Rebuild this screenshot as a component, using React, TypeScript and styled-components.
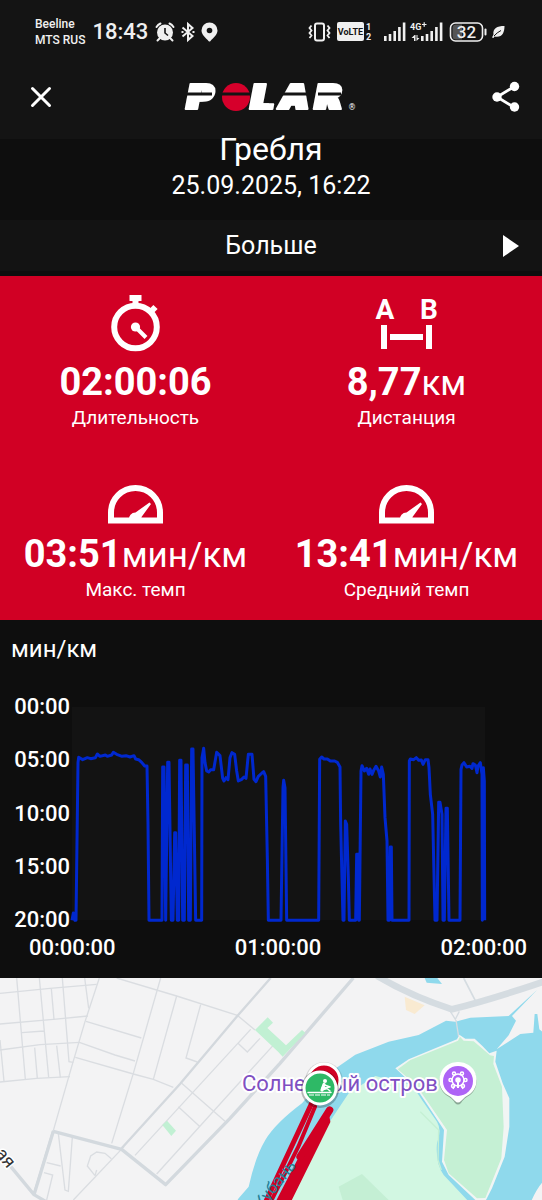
import React from "react";
import styled, { createGlobalStyle } from "styled-components";

const GlobalStyle = createGlobalStyle`
  *, *::before, *::after { box-sizing: border-box; }
  body { margin: 0; background: #0e0e0e; }
  svg { display: block; flex: none; overflow: visible; }
`;

const Screen = styled.div`
  display: flex;
  flex-direction: column;
  min-height: 100vh;
  background: #0e0e0e;
  color: #fff;
  font-family: Roboto, "Noto Sans", sans-serif;
`;

const Header = styled.header`
  background: #141414;
`;

const StatusBar = styled.div`
  display: flex;
  align-items: center;
  height: 64px;
  padding: 0 37px 0 35px;
  color: #f0f0f0;
`;

const Carriers = styled.div`
  font-size: 12px;
  font-weight: 500;
  line-height: 16px;
  white-space: nowrap;
`;

const Clock = styled.time`
  margin: 0 7px;
  font-size: 22px;
  line-height: 28px;
  font-weight: 500;
`;

const StatusGroup = styled.div<{ $end?: boolean }>`
  display: flex;
  align-items: center;
  gap: 6px;
  margin-left: ${(p) => (p.$end ? "auto" : "0")};
`;

const TitleBar = styled.div`
  display: flex;
  align-items: center;
  justify-content: space-between;
  height: 75px;
  padding: 0 20px 10px 28px;
`;

const IconButton = styled.button`
  display: flex;
  padding: 0;
  border: 0;
  background: none;
  color: #fff;
  cursor: pointer;
`;

const SessionHead = styled.section`
  display: flex;
  flex-direction: column;
  align-items: center;
  height: 81px;
`;

const Sport = styled.h1`
  margin: -9px 0 0;
  font-size: 32px;
  line-height: 38px;
  font-weight: 400;
`;

const SessionDate = styled.time`
  margin-top: 3px;
  font-size: 25px;
  line-height: 30px;
`;

const MoreButton = styled.button`
  display: grid;
  grid-template-columns: 40px 1fr 40px;
  align-items: center;
  height: 51px;
  margin-bottom: 5px;
  padding: 0;
  border: 0;
  background: #131313;
  color: #fff;
  font: 400 25px/30px Roboto, "Noto Sans", sans-serif;
  cursor: pointer;
`;

const MoreText = styled.span`
  grid-column: 2;
`;

const Metrics = styled.section`
  display: grid;
  grid-template-columns: 1fr 1fr;
  background: #d10024;
`;

const Metric = styled.div`
  display: flex;
  flex-direction: column;
  align-items: center;
  padding: 18px 0;
`;

const MetricIcon = styled.div`
  display: flex;
  align-items: flex-end;
  height: 58px;
`;

const MetricValue = styled.div`
  margin-top: 8px;
  font-size: 38px;
  line-height: 44px;
  font-weight: 700;
  white-space: nowrap;
`;

const Unit = styled.span`
  font-size: 35px;
  line-height: 1;
  font-weight: 400;
`;

const MetricLabel = styled.div`
  margin-top: 2px;
  font-size: 19px;
  line-height: 24px;
`;

const ChartPanel = styled.section`
  padding: 15px 0 18px;
`;

const ChartUnit = styled.h2`
  margin: 0 0 31px 11px;
  font-size: 24px;
  line-height: 29px;
  font-weight: 400;
`;

const ChartBody = styled.div`
  display: grid;
  grid-template-columns: 70px 1fr;
  column-gap: 2px;
  padding-right: 57px;
`;

const AxisY = styled.div`
  display: flex;
  flex-direction: column;
  justify-content: space-between;
  align-items: flex-end;
  height: 237px;
  font-size: 22px;
  line-height: 24px;
  font-weight: 500;
`;

const Plot = styled.svg`
  width: 100%;
  height: 213px;
  margin-top: 12px;
  background: #131313;
`;

const AxisX = styled.div`
  display: flex;
  justify-content: space-between;
  padding: 4px 15px 0 29px;
  font-size: 22px;
  line-height: 24px;
  font-weight: 500;
`;

const MapSection = styled.section`
  flex: 1 0 222px;
  background: #f3f3f4;
  overflow: hidden;
`;

const MapDrawing = styled.svg`
  width: 100%;
  height: 100%;
  min-height: 222px;
  overflow: hidden;
`;

const AlarmIcon = () => (
  <svg width="20" height="20" viewBox="0 0 20 20" fill="none" stroke="#f0f0f0">
    <circle cx="10" cy="10.5" r="8" fill="#f0f0f0" stroke="none" />
    <path d="M1.5 5A10 10 0 0 1 5.5 1.5M14.5 1.5A10 10 0 0 1 18.5 5" strokeWidth="2" strokeLinecap="round" />
    <path d="M4.5 16.5L2.5 18.5M15.5 16.5L17.5 18.5" strokeWidth="2" strokeLinecap="round" />
    <path d="M10 6V11L13 13.5" stroke="#141414" strokeWidth="1.6" />
  </svg>
);

const BluetoothIcon = () => (
  <svg width="14" height="20" viewBox="0 0 14 20" fill="none" stroke="#f0f0f0" strokeWidth="2">
    <path d="M1.5 5.5L11.5 14L7 18V2L11.5 6L1.5 14.5" />
    <path d="M0.5 10H2.5M11.5 10H13.5" />
  </svg>
);

const PlaceIcon = () => (
  <svg width="17" height="20" viewBox="0 0 17 20">
    <path d="M8.5 0.5A8 8 0 0 0 0.5 8.5C0.5 13 5 16 7.5 19Q8.5 20 9.5 19C12 16 16.5 13 16.5 8.5A8 8 0 0 0 8.5 0.5Z" fill="#f0f0f0" />
    <circle cx="8.5" cy="8.5" r="2.8" fill="#141414" />
  </svg>
);

const VibrateIcon = () => (
  <svg width="23" height="20" viewBox="0 0 23 20" fill="none" stroke="#f0f0f0" strokeWidth="2">
    <rect x="7" y="1.5" width="9" height="17" rx="2" />
    <path d="M3.5 3.5L1.5 6L3.5 8.5L1.5 11L3.5 13.5L1.5 16M19.5 3.5L21.5 6L19.5 8.5L21.5 11L19.5 13.5L21.5 16" strokeWidth="1.8" />
  </svg>
);

const VolteIcon = () => (
  <svg width="41" height="20" viewBox="0 0 41 20" fill="#f0f0f0">
    <rect x="0" y="0" width="27" height="19" rx="2" />
    <text x="13.5" y="13" textAnchor="middle" fontSize="9" fontWeight="700" fill="#141414">VoLTE</text>
    <text x="29" y="8" fontSize="9" fontWeight="700">1</text>
    <text x="29" y="18" fontSize="9" fontWeight="700">2</text>
  </svg>
);

const SignalBars = () => (
  <g>
    <rect x="0" y="14" width="2.6" height="5" />
    <rect x="4.7" y="12" width="2.6" height="7" />
    <rect x="9.4" y="9" width="2.6" height="10" />
    <rect x="14.1" y="5" width="2.6" height="14" />
    <rect x="18.8" y="0.5" width="2.6" height="18.5" />
  </g>
);

const SignalIcons = () => (
  <svg width="60" height="20" viewBox="0 0 60 20" fill="#f0f0f0">
    <SignalBars />
    <g transform="translate(37 0)"><SignalBars /></g>
    <text x="26" y="8" fontSize="9" fontWeight="700">4G</text>
    <path d="M38 2.5H42.5M40.2 0.3V4.8" stroke="#f0f0f0" strokeWidth="1.2" />
    <path d="M30.5 13L27.5 16H30V19H31.5V13ZM32.5 19L35.5 16H33.5V13H32.5Z" />
  </svg>
);

const BatteryIcon = () => (
  <svg width="36" height="20" viewBox="0 0 36 20">
    <path d="M12 2.5H6Q2.5 2.5 2.5 6V14Q2.5 17.5 6 17.5H12Z" fill="#555" />
    <rect x="0.5" y="1" width="32" height="18" rx="5" fill="none" stroke="#f0f0f0" strokeWidth="1.6" />
    <path d="M35.5 7.5V12.5" stroke="#f0f0f0" strokeWidth="2" strokeLinecap="round" />
    <text x="16.5" y="16" textAnchor="middle" fontSize="17" fontWeight="500" fill="#f0f0f0">32</text>
  </svg>
);

const LeafIcon = () => (
  <svg width="13" height="14" viewBox="0 0 13 14">
    <path d="M12.5 1C5 1 0.5 3.5 1.5 9.5L0 12.5L1.5 13L2.5 11.5C10 13 12.5 8 12.5 1Z" fill="#f0f0f0" />
    <path d="M2 11Q5 7.5 9 5.5" stroke="#141414" strokeWidth="1" fill="none" />
  </svg>
);

const Brand = styled.svg`
  margin-right: 4px;
  font-family: "DejaVu Sans", sans-serif;
`;

const BrandLetters = styled.g`
  fill: #fff;
  stroke: #fff;
  stroke-width: 2px;
  stroke-linejoin: round;
  font-size: 34px;
  font-weight: 700;
  font-style: italic;
  filter: drop-shadow(5px 0 0 #fff);
`;

const PolarLogo = () => (
  <Brand width="174" height="32" viewBox="0 0 174 32" role="img" aria-label="Polar">
    <BrandLetters>
      <text x="1" y="28">P</text>
      <text x="65" y="28">L</text>
      <text x="95" y="28">A</text>
      <text x="129" y="28">R</text>
    </BrandLetters>
    <circle cx="52" cy="16" r="14" fill="#d6002b" />
    <path d="M2 13H28M38 13H66M98 13H130M134 13H157" stroke="#141414" strokeWidth="3" />
    <text x="164" y="29" fontSize="8" fill="#fff">®</text>
  </Brand>
);

const CloseIcon = () => (
  <svg width="26" height="26" viewBox="0 0 26 26" stroke="#fff" strokeWidth="3" strokeLinecap="round">
    <path d="M4.5 4.5L21.5 21.5M21.5 4.5L4.5 21.5" />
  </svg>
);

const ShareIcon = () => (
  <svg width="30" height="32" viewBox="0 0 30 32" fill="#fff">
    <path d="M22.5 5.5L5 16L22.5 26.5" fill="none" stroke="#fff" strokeWidth="2.8" />
    <circle cx="22.5" cy="5.5" r="4.7" />
    <circle cx="5" cy="16" r="4.7" />
    <circle cx="22.5" cy="26" r="4.7" />
  </svg>
);

const StopwatchIcon = () => (
  <svg width="50" height="58" viewBox="0 0 50 58" fill="none" stroke="#fff">
    <circle cx="24.5" cy="33" r="21.3" strokeWidth="6" />
    <path d="M18.5 1H30.5V7H27.5V11H21.5V7H18.5Z" fill="#fff" stroke="none" />
    <path d="M38.5 19L44.5 13" strokeWidth="6" />
    <path d="M24.5 33L35 43.5" strokeWidth="4" />
    <circle cx="24.5" cy="33" r="4.6" fill="#fff" stroke="none" />
  </svg>
);

const DistanceIcon = () => (
  <svg width="64" height="58" viewBox="0 0 64 58" fill="#fff">
    <text x="10" y="25" textAnchor="middle" fontSize="28" fontWeight="700">A</text>
    <text x="54" y="25" textAnchor="middle" fontSize="28" fontWeight="700">B</text>
    <path d="M6 31H12V55H6ZM51 31H57V55H51ZM15 40H48V46H15Z" />
  </svg>
);

const GaugeIcon = () => (
  <svg width="56" height="40" viewBox="0 0 56 40" fill="none" stroke="#fff" strokeWidth="6">
    <path d="M3 36.5V28.5A24.5 24.5 0 0 1 52 28.5V36.5Z" />
    <path d="M21 36A6.5 6.5 0 0 1 27.5 28.5L41.5 18.5L43 20L33.5 33V36Z" fill="#fff" stroke="none" />
  </svg>
);

const metrics = [
  { icon: <StopwatchIcon />, value: "02:00:06", unit: "", label: "Длительность" },
  { icon: <DistanceIcon />, value: "8,77", unit: "км", label: "Дистанция" },
  { icon: <GaugeIcon />, value: "03:51", unit: "мин/км", label: "Макс. темп" },
  { icon: <GaugeIcon />, value: "13:41", unit: "мин/км", label: "Средний темп" },
];

const paceLine =
  "216,688 220,666 225,688 228,688 234,215 236,199 241,202 248,206 262,200 272,203 286,200 292,189 300,196 316,192 322,196 335,192 340,184 350,190 366,196 378,194 390,198 402,194 407,204 416,206 425,214 434,225 441,225 444,400 447,688 " +
  "486,688 488,228 492,228 497,688 503,214 507,214 514,688 519,688 524,425 527,425 532,688 536,688 539,208 543,208 548,688 553,688 557,222 562,222 566,688 571,688 575,174 579,174 587,688 605,688 606,200 611,172 615,215 620,240 626,243 632,236 641,236 650,184 660,194 668,262 672,270 678,260 684,266 690,200 696,185 704,190 710,240 715,270 724,266 732,258 738,262 745,190 756,190 762,265 768,272 775,256 786,246 791,242 797,256 802,500 805,688 " +
  "843,688 849,290 851,268 855,290 860,688 956,688 959,205 965,198 972,204 982,204 991,210 1004,210 1012,214 1020,228 1022,400 1029,688 1032,688 1036,390 1040,400 1045,560 1048,688 1067,688 1070,490 1075,490 1076,688 1078,688 1083,240 1086,224 1093,240 1100,232 1106,250 1110,234 1116,250 1122,236 1128,226 1136,240 1141,258 1145,228 1150,250 1155,380 1161,450 1164,688 1168,688 1171,468 1174,468 1176,688 " +
  "1227,688 1228,210 1231,204 1241,206 1249,200 1256,208 1264,207 1269,220 1276,206 1284,206 1287,230 1291,310 1298,370 1305,688 1311,688 1316,334 1320,334 1326,370 1329,688 1333,688 1338,352 1342,352 1347,688 1380,688 1383,235 1386,222 1392,215 1400,228 1410,226 1416,232 1419,218 1426,222 1431,245 1434,225 1441,215 1446,250 1447,688 1450,230 1453,270 1454,688";

const PaceChart = () => (
  <ChartPanel>
    <ChartUnit>мин/км</ChartUnit>
    <ChartBody>
      <AxisY>
        {["00:00", "05:00", "10:00", "15:00", "20:00"].map((t) => (
          <span key={t}>{t}</span>
        ))}
      </AxisY>
      <Plot viewBox="216 48 1239 639" preserveAspectRatio="none" role="img" aria-label="Темп, мин/км">
        <polyline points={paceLine} fill="none" stroke="#0028cf" strokeWidth="3" strokeLinejoin="round" vectorEffect="non-scaling-stroke" />
      </Plot>
    </ChartBody>
    <AxisX>
      {["00:00:00", "01:00:00", "02:00:00"].map((t) => (
        <span key={t}>{t}</span>
      ))}
    </AxisX>
  </ChartPanel>
);

const RouteMap = () => (
  <MapSection aria-label="Карта маршрута">
    <MapDrawing viewBox="0 0 542 222" preserveAspectRatio="xMidYMin slice" fontFamily="Roboto, 'Noto Sans', sans-serif">
      <g transform="translate(0 -8) scale(0.33333)" fill="none">
        <g stroke="#dadde1" strokeWidth="4">
          <path d="M0 70L150 55L290 43M0 162L160 148L264 138M0 240L120 224L240 217M0 336L110 325L210 320" />
          <path d="M50 24L76 328M118 24L146 322M187 24L207 275L220 277M254 24L266 115M154 56L162 148M104 233L112 325M170 227L181 322M66 188L132 183M0 210L12 334" />
          <path d="M298 24L255 155L215 290L160 482M482 24L400 310L335 520M350 24L530 78L712 136L765 180M258 154L424 204M238 217L345 255L405 273M226 262L400 312L460 328L520 352" />
          <path d="M530 78L460 328M602 104L558 264L592 276M752 178L405 556M825 220L470 612M545 340L675 454M535 410L600 470M714 220L742 246L780 205M714 220L752 178" />
          <path d="M175 490L195 660L205 664L217 502M140 578L182 588M132 608L158 615L140 690M372 530L220 690M285 617L262 588L272 558L290 546L315 550L334 566M285 617L290 600" />
        </g>
        <path d="M812 24L712 138L540 342L365 535M160 482L102 672" stroke="#d3d8dd" strokeWidth="7" />
        <path d="M160 484L365 538L497 644L690 445L840 280L1060 24M160 484L102 674L20 575M102 674L140 696" stroke="#d3d9de" strokeWidth="10" strokeLinejoin="round" />
        <path d="M487 465L501 452L528 482L514 498Z" fill="#c1f0d3" />
        <path d="M765 180L803 142L819 158L802 174L858 226L906 180L916 188L848 260L835 246Z" fill="#c1f0d3" />
        <g transform="translate(786 0)">
          <path d="M345 18Q450 80 570 118Q690 88 860 30" stroke="#d5dce1" strokeWidth="20" />
          <path d="M605 24L640 92" stroke="#d5dce1" strokeWidth="5" />
          <path d="M428 80L488 106L458 132L432 120Z" fill="#f9ead1" />
          <path d="M488 24H526L540 42L494 38Z" fill="#8fd9ec" />
          <path d="M552 152L580 155L625 143L740 138L825 60L750 138L762 152L740 196L704 238L775 192L814 188L818 132L826 132L832 178L860 200V620Q830 640 805 700H-80L-70 685L-40 650Q-20 560 10 510Q40 460 120 400L200 310L280 254L380 215L470 195Z" fill="#8fd9ec" />
          <path d="M60 700L200 460L260 370L340 318L450 345L480 390L525 455Q540 480 525 520Q520 580 545 615L625 700Z" fill="#d2f7e2" />
          <path d="M400 295L440 268L585 208L592 194L610 206L638 206Q660 225 682 250L704 242L700 275L722 340L742 385V470L728 560L690 655L672 690H640L560 615L540 575L546 480L500 410L460 350Z" fill="#f1f5f4" />
          <path d="M407 298L445 270L588 212L594 200L605 212L635 214Q660 235 684 256L696 258L694 282L720 350L725 470L718 565L688 640L670 684L645 685L560 610L546 570L555 480L500 400L462 345Z" fill="#c5f0d4" />
          <path d="M475 425L530 480L528 570L538 600" stroke="#c5f0d4" strokeWidth="4" />
          <path d="M230 650L300 612L390 700H245Z" fill="#c4efd4" />
          <path d="M582 150L590 200M565 124L580 148L592 124" stroke="#d5dce1" strokeWidth="4" />
        </g>
      </g>
      <text x="242" y="113" fontSize="22" fill="#7f50c2" stroke="#fff" strokeWidth="4" strokeLinejoin="round" paintOrder="stroke">
        Солнечный остров
      </text>
      <g transform="translate(220 62) scale(0.33333)" fill="none" stroke="#d10024" strokeLinecap="round">
        <path d="M275 190L135 490" strokeWidth="15" />
        <path d="M285 200L235 320L150 490" strokeWidth="12" />
        <path d="M322 225L326 245L205 490L170 490L250 335Z" fill="#d10024" strokeWidth="10" strokeLinejoin="round" />
        <path d="M329 210L240 350" strokeWidth="22" />
      </g>
      <text transform="translate(262 232) rotate(-52)" fontSize="17" fill="#237f96">Кубань</text>
      <text transform="translate(-5 176) rotate(50)" fontSize="18" fill="#333" stroke="#fff" strokeWidth="3" paintOrder="stroke">ая</text>
      <circle cx="324" cy="103" r="19" fill="#000" opacity="0.12" />
      <circle cx="324" cy="102" r="16" fill="#d10024" stroke="#fff" strokeWidth="3" />
      <circle cx="320" cy="111" r="19" fill="#000" opacity="0.25" />
      <circle cx="320" cy="110" r="16" fill="#2eb966" stroke="#fff" strokeWidth="3" />
      <g fill="none" stroke="#fff" strokeLinecap="round" strokeLinejoin="round">
        <circle cx="325" cy="103" r="2" fill="#fff" stroke="none" />
        <path d="M324 106.5L322 112" strokeWidth="3.2" />
        <path d="M324.5 107L330 109L322 110M322 112L327 110.5L330 113" strokeWidth="1.5" />
        <path d="M308 114.5H331" strokeWidth="1.5" />
        <path d="M309 117H330" strokeWidth="1.2" strokeDasharray="5 1" strokeLinecap="butt" />
      </g>
      <path d="M458 85A18 18 0 0 0 446 117Q452 120 455 125Q458 128 461 125Q464 120 470 117A18 18 0 0 0 458 85Z" fill="#000" opacity="0.3" />
      <path d="M458 84A18 18 0 0 0 446 116Q452 119 455 123Q458 126 461 123Q464 119 470 116A18 18 0 0 0 458 84Z" fill="#fff" />
      <circle cx="458" cy="103" r="15" fill="#ae64f6" />
      <g fill="none" stroke="#fff" strokeWidth="1.5">
        <circle cx="458" cy="102" r="6" />
        <circle cx="458" cy="102" r="2" fill="#fff" />
        <path d="M458 104V110" strokeWidth="2" />
        <path d="M455 107L453 111M461 107L463 111" />
        <circle cx="454" cy="95.5" r="1.5" />
        <circle cx="462" cy="95.5" r="1.5" />
        <circle cx="450.5" cy="102" r="1.5" />
        <circle cx="465.5" cy="102" r="1.5" />
        <circle cx="453" cy="108" r="1.5" />
        <circle cx="463" cy="108" r="1.5" />
      </g>
    </MapDrawing>
  </MapSection>
);

export default function App() {
  return (
    <Screen>
      <GlobalStyle />
      <Header>
        <StatusBar>
          <Carriers>
            <div>Beeline</div>
            <div>MTS RUS</div>
          </Carriers>
          <Clock>18:43</Clock>
          <StatusGroup>
            <AlarmIcon />
            <BluetoothIcon />
            <PlaceIcon />
          </StatusGroup>
          <StatusGroup $end>
            <VibrateIcon />
            <VolteIcon />
            <SignalIcons />
            <BatteryIcon />
            <LeafIcon />
          </StatusGroup>
        </StatusBar>
        <TitleBar>
          <IconButton type="button" aria-label="Закрыть"><CloseIcon /></IconButton>
          <PolarLogo />
          <IconButton type="button" aria-label="Поделиться"><ShareIcon /></IconButton>
        </TitleBar>
      </Header>
      <SessionHead>
        <Sport>Гребля</Sport>
        <SessionDate>25.09.2025, 16:22</SessionDate>
      </SessionHead>
      <MoreButton type="button">
        <MoreText>Больше</MoreText>
        <svg width="17" height="24" viewBox="0 0 17 24" fill="#fff" aria-hidden="true">
          <path d="M1 1L17 12L1 23Z" />
        </svg>
      </MoreButton>
      <Metrics>
        {metrics.map((m) => (
          <Metric key={m.label}>
            <MetricIcon>{m.icon}</MetricIcon>
            <MetricValue>
              {m.value}
              {m.unit && <Unit>{m.unit}</Unit>}
            </MetricValue>
            <MetricLabel>{m.label}</MetricLabel>
          </Metric>
        ))}
      </Metrics>
      <PaceChart />
      <RouteMap />
    </Screen>
  );
}
